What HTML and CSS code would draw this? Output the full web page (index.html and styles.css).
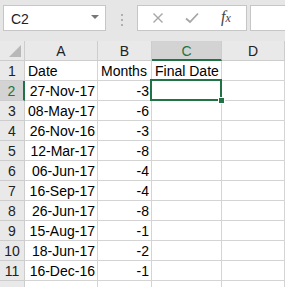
FILE: index.html
```html
<!DOCTYPE html>
<html>
<head>
<meta charset="utf-8">
<link rel="stylesheet" href="styles.css">
</head>
<body>
<div class="topbar">
  <div class="namebox"><span class="ref">C2</span><span class="caret"></span></div>
  <div class="grip"><i></i><i></i><i></i></div>
  <div class="fxbox">
    <svg class="ico" width="12" height="12" viewBox="0 0 12 12"><path d="M1.5 1.5 L10.5 10.5 M10.5 1.5 L1.5 10.5" stroke="#a6a6a6" stroke-width="1.4" fill="none"/></svg>
    <svg class="ico" width="14" height="12" viewBox="0 0 14 12"><path d="M1 6.5 L5 10 L13 1.5" stroke="#a6a6a6" stroke-width="1.8" fill="none"/></svg>
    <span class="fx">f<span class="x">x</span></span>
  </div>
  <div class="formula"></div>
</div>
<div class="sheet">
  <div class="hd corner"><span class="tri"></span></div>
  <div class="hd col">A</div>
  <div class="hd col">B</div>
  <div class="hd col sel">C</div>
  <div class="hd col">D</div>

  <div class="hd row">1</div>
  <div class="c">Date</div><div class="c">Months</div><div class="c">Final Date</div><div class="c"></div>

  <div class="hd row sel">2</div>
  <div class="c r">27-Nov-17</div><div class="c r">-3</div><div class="c active"><span class="handle"></span></div><div class="c"></div>

  <div class="hd row">3</div>
  <div class="c r">08-May-17</div><div class="c r">-6</div><div class="c"></div><div class="c"></div>

  <div class="hd row">4</div>
  <div class="c r">26-Nov-16</div><div class="c r">-3</div><div class="c"></div><div class="c"></div>

  <div class="hd row">5</div>
  <div class="c r">12-Mar-17</div><div class="c r">-8</div><div class="c"></div><div class="c"></div>

  <div class="hd row">6</div>
  <div class="c r">06-Jun-17</div><div class="c r">-4</div><div class="c"></div><div class="c"></div>

  <div class="hd row">7</div>
  <div class="c r">16-Sep-17</div><div class="c r">-4</div><div class="c"></div><div class="c"></div>

  <div class="hd row">8</div>
  <div class="c r">26-Jun-17</div><div class="c r">-8</div><div class="c"></div><div class="c"></div>

  <div class="hd row">9</div>
  <div class="c r">15-Aug-17</div><div class="c r">-1</div><div class="c"></div><div class="c"></div>

  <div class="hd row">10</div>
  <div class="c r">18-Jun-17</div><div class="c r">-2</div><div class="c"></div><div class="c"></div>

  <div class="hd row">11</div>
  <div class="c r">16-Dec-16</div><div class="c r">-1</div><div class="c"></div><div class="c"></div>

  <div class="hd row"></div>
  <div class="c"></div><div class="c"></div><div class="c"></div><div class="c"></div>
</div>
</body>
</html>
```

FILE: styles.css
```css
html, body {
  margin: 0;
  padding: 0;
  background: #ffffff;
  overflow: hidden;
}
body {
  width: 285px;
  height: 287px;
  font-family: "Liberation Sans", Arial, sans-serif;
  color: #000;
}
.topbar {
  height: 41px;
  background: #e6e6e6;
  display: flex;
  align-items: flex-start;
  padding-top: 5px;
  padding-left: 3px;
  box-sizing: border-box;
}
.namebox {
  width: 103px;
  height: 26px;
  background: #fff;
  border: 1px solid #c6c6c6;
  box-sizing: border-box;
  display: flex;
  align-items: center;
  justify-content: space-between;
  padding: 0 6px 0 7px;
  font-size: 14px;
  color: #222;
}
.ref { position: relative; top: 1px; }
.caret {
  width: 0; height: 0;
  border-left: 4px solid transparent;
  border-right: 4px solid transparent;
  border-top: 4px solid #777;
  margin-bottom: 3px;
}
.grip {
  width: 31px;
  display: flex;
  flex-direction: column;
  align-items: center;
  gap: 3px;
  padding-top: 9px;
}
.grip i {
  display: block;
  width: 2px; height: 2px;
  background: #b0b0b0;
}
.fxbox {
  width: 110px;
  height: 26px;
  background: #fff;
  border: 1px solid #c6c6c6;
  box-sizing: border-box;
  display: flex;
  align-items: center;
  padding-left: 14px;
}
.ico { display: block; }
.ico + .ico { margin-left: 21px; }
.fx {
  margin-left: 22px;
  font-family: "Liberation Serif", "Times New Roman", serif;
  font-style: italic;
  font-size: 16px;
  color: #444;
  position: relative;
  top: -1px;
}
.fx .x { font-size: 12px; }
.formula {
  margin-left: 3px;
  flex: 1;
  height: 26px;
  background: #fff;
  border: 1px solid #c6c6c6;
  border-right: none;
  box-sizing: border-box;
}
.sheet {
  display: grid;
  grid-template-columns: 25px 73px 54px 70px 1fr;
  grid-auto-rows: 20px;
}
.hd {
  background: #e9e9e9;
  border-right: 1px solid #cdcdcd;
  border-bottom: 1px solid #cdcdcd;
  box-sizing: border-box;
  display: flex;
  align-items: center;
  justify-content: center;
  font-size: 14px;
  color: #222;
}
.hd.col { padding-top: 1px; }
.hd.col.sel {
  background: #d3d3d3;
  color: #217346;
  border-bottom: 2px solid #217346;
}
.hd.row.sel {
  background: #d3d3d3;
  color: #217346;
  border-right: 2px solid #217346;
}
.corner { position: relative; }
.tri {
  position: absolute;
  right: 3px;
  bottom: 3px;
  width: 0; height: 0;
  border-left: 12px solid transparent;
  border-bottom: 12px solid #b8b8b8;
}
.c {
  border-right: 1px solid #d4d4d4;
  border-bottom: 1px solid #d4d4d4;
  box-sizing: border-box;
  font-size: 14px;
  line-height: 19px;
  padding: 1px 2px 0 3px;
  white-space: nowrap;
  overflow: visible;
}
.c.r { text-align: right; padding-right: 2px; }
.active {
  position: relative;
}
.active::before {
  content: "";
  position: absolute;
  left: -2px; top: -2px; right: -1px; bottom: -1px;
  border: 2px solid #217346;
}
.handle {
  position: absolute;
  right: -4px;
  bottom: -4px;
  width: 5px; height: 5px;
  background: #217346;
  border: 1px solid #fff;
}
```
